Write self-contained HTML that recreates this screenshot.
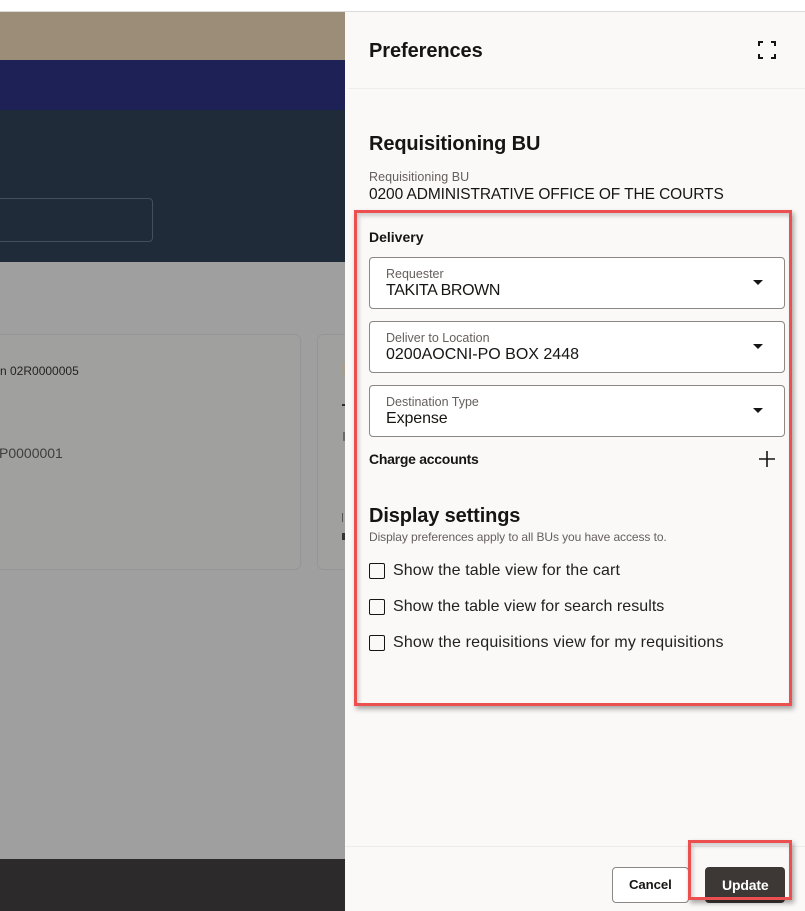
<!DOCTYPE html>
<html lang="en"><head><meta charset="utf-8"><title>Preferences</title>
<style>
html,body{margin:0;padding:0}
body{width:805px;height:911px;position:relative;overflow:hidden;background:#fff;font-family:"Liberation Sans",sans-serif;color:#161513}
.a{position:absolute}
.t{position:absolute;white-space:nowrap;line-height:1}
.field{position:absolute;left:369px;width:414px;height:50px;border:1px solid #8a8784;border-radius:4px;background:#fff}
.lab{position:absolute;left:16px;top:9px;font-size:12.5px;line-height:14px;color:#655f5c;white-space:nowrap}
.val{position:absolute;left:16px;top:24px;font-size:16px;line-height:18px;color:#161513;white-space:nowrap}
.car{position:absolute;left:383px;top:22px;width:0;height:0;border-left:5px solid transparent;border-right:5px solid transparent;border-top:5px solid #161513}
.cb{position:absolute;left:369px;width:13.5px;height:13.5px;border:1.3px solid #161513;border-radius:2px;background:#fbf9f8}
.red{position:absolute;box-sizing:border-box;border:3px solid #ec4f4f;box-shadow:2px 3px 5px rgba(0,0,0,.35),inset 2px 3px 4px rgba(0,0,0,.18)}
</style></head><body>
<div class="a" style="left:0;top:0;width:805px;height:11px;background:#fff"></div>
<div class="a" style="left:0;top:11px;width:805px;height:1px;background:#dcdad8"></div>
<div class="a" style="left:0;top:12px;width:345px;height:48px;background:#9c8d79"></div>
<div class="a" style="left:0;top:60px;width:345px;height:50px;background:#1e2155"></div>
<div class="a" style="left:0;top:110px;width:345px;height:152px;background:#1f2b38"></div>
<div class="a" style="left:-10px;top:198px;width:161px;height:42px;border:1px solid #434f5b;border-radius:4px"></div>
<div class="a" style="left:0;top:262px;width:345px;height:597px;background:#a09f9f"></div>
<div class="a" style="left:-10px;top:334px;width:309px;height:234px;border:1px solid #959595;border-radius:6px;background:#a0a09f"></div>
<div class="a" style="left:317px;top:334px;width:40px;height:234px;border:1px solid #959595;border-radius:6px;background:#a0a09f"></div>
<div class="t" style="left:0;top:365px;font-size:12px;color:#242322">n 02R0000005</div>
<div class="t" style="left:-1px;top:446px;font-size:14px;color:#3f3e3d">P0000001</div>
<div class="a" style="left:342px;top:363px;width:3px;height:13px;background:#a69f90;border-radius:3px 0 0 3px"></div>
<div class="a" style="left:342px;top:404px;width:3px;height:2px;background:#2a2a2a"></div>
<div class="a" style="left:343px;top:432px;width:2px;height:9px;background:#6a6a6a"></div>
<div class="a" style="left:342px;top:513px;width:1px;height:9px;background:#555"></div>
<div class="a" style="left:342px;top:533px;width:3px;height:7px;background:#333"></div>
<div class="a" style="left:0;top:859px;width:345px;height:52px;background:#2c2a2a"></div>

<div class="a" style="left:345px;top:12px;width:460px;height:899px;background:#fbf9f8"></div>
<div class="a" style="left:348px;top:88px;width:457px;height:1px;background:#efedeb"></div>
<div class="a" style="left:345px;top:846px;width:460px;height:1px;background:#eeecea"></div>

<div class="t" style="left:369px;top:41px;font-size:20px;font-weight:700;letter-spacing:-.08px">Preferences</div>
<svg class="a" style="left:758px;top:41px" width="18" height="18" viewBox="0 0 18 18" fill="none" stroke="#161513" stroke-width="2"><path d="M1 5V1H5M13 1H17V5M1 13V17H5M13 17H17V13"/></svg>

<div class="t" style="left:369px;top:134px;font-size:20px;font-weight:700;letter-spacing:-.12px">Requisitioning BU</div>
<div class="t" style="left:369px;top:171px;font-size:12.5px;color:#655f5c;letter-spacing:.05px">Requisitioning BU</div>
<div class="t" style="left:369px;top:187px;font-size:15.5px;letter-spacing:-.09px">0200 ADMINISTRATIVE OFFICE OF THE COURTS</div>

<div class="t" style="left:369px;top:230px;font-size:14px;font-weight:700">Delivery</div>

<div class="field" style="top:257px"><div class="lab">Requester</div><div class="val" style="letter-spacing:-.37px">TAKITA BROWN</div><div class="car"></div></div>
<div class="field" style="top:321px"><div class="lab">Deliver to Location</div><div class="val">0200AOCNI-PO BOX 2448</div><div class="car"></div></div>
<div class="field" style="top:385px"><div class="lab">Destination Type</div><div class="val" style="letter-spacing:-.1px">Expense</div><div class="car"></div></div>

<div class="t" style="left:369px;top:452px;font-size:14px;font-weight:700;letter-spacing:-.27px">Charge accounts</div>
<svg class="a" style="left:758px;top:450px" width="18" height="18" viewBox="0 0 18 18" fill="none" stroke="#161513" stroke-width="1.6"><path d="M9 1V17M1 9H17"/></svg>

<div class="t" style="left:369px;top:506px;font-size:20px;font-weight:700;letter-spacing:-.13px">Display settings</div>
<div class="t" style="left:369px;top:531px;font-size:12px;color:#655f5c;letter-spacing:-.08px">Display preferences apply to all BUs you have access to.</div>

<div class="cb" style="top:563px"></div>
<div class="t" style="left:393px;top:563px;font-size:16px;color:#23211f;letter-spacing:.12px">Show the table view for the cart</div>
<div class="cb" style="top:599px"></div>
<div class="t" style="left:393px;top:599px;font-size:16px;color:#23211f;letter-spacing:.05px">Show the table view for search results</div>
<div class="cb" style="top:635px"></div>
<div class="t" style="left:393px;top:635px;font-size:16px;color:#23211f;letter-spacing:.17px">Show the requisitions view for my requisitions</div>

<div class="a" style="left:612px;top:867px;width:75px;height:34px;border:1px solid #8a8784;border-radius:4px;background:#fff"></div>
<div class="t" style="left:629px;top:878px;font-size:13.2px;font-weight:700;color:#161513;letter-spacing:-.1px">Cancel</div>
<div class="a" style="left:705px;top:867px;width:80px;height:36px;border-radius:4px;background:#3d3836"></div>
<div class="t" style="left:722px;top:878px;font-size:14px;font-weight:700;color:#fff;letter-spacing:-.15px">Update</div>

<div class="red" style="left:354px;top:210px;width:438px;height:496px"></div>
<div class="red" style="left:688px;top:840px;width:104px;height:60px"></div>
</body></html>
